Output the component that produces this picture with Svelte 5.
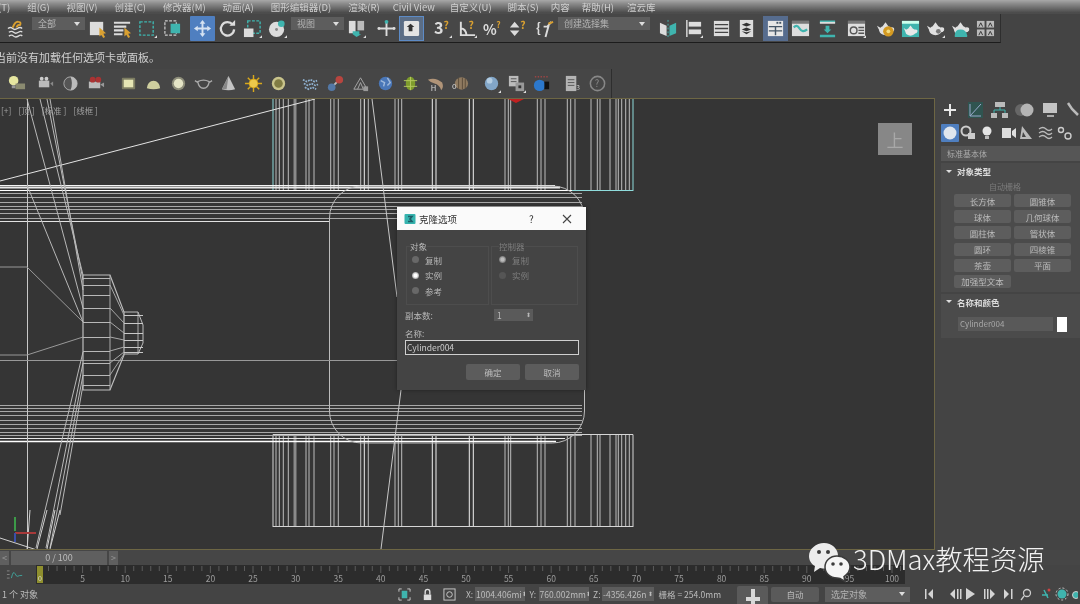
<script>
	const W = '#dcdcdc', T = '#3fb4ae', O = '#d9a031';
	const TEAPOT = `<ellipse cx="10" cy="12" rx="6.500" ry="5"/><path d="M1 7l5 3-1 5zM15 9q5-1 4 3-1 2-4 2zM7 7.500h6l-3-4z"/>`;

	// toolbar glyphs, 20x20 box
	const icons = {
		bind: `<path d="M2 10q3-2 5 0t5 0 5 0M3 14q3-2 5 0t5 0 4 0M3 18q3-2 5 0t5 0 4 0" fill="none" stroke="${W}" stroke-width="1.4"/><path d="M7 9q3-7 6-6 3 0 2 3-3 0-4 3" fill="none" stroke="${O}" stroke-width="2"/>`,
		select: `<rect x="2" y="3" width="14" height="14" fill="${W}"/><path d="M12 9l7 6-3 .5 2 3.500-2 1-2-3.500-2 2z" fill="${O}"/>`,
		byname: `<path d="M1 4h17M1 8h13M1 12h10M1 16h9" stroke="${W}" stroke-width="2.200"/><path d="M12 9l7 6-3 .5 2 3.500-2 1-2-3.500-2 2z" fill="${O}"/>`,
		rect: `<rect x="2" y="3" width="14" height="14" fill="none" stroke="${T}" stroke-width="1.500" stroke-dasharray="3 1.500"/><path d="M20 17v3h-3z" fill="#ddd"/>`,
		win: `<rect x="2" y="2" width="12" height="15" fill="none" stroke="#ccc" stroke-width="1.300" stroke-dasharray="3 1.500"/><rect x="8" y="5" width="10" height="10" fill="${T}"/>`,
		move: `<path d="M10 1l3 4h-2v4h4V7l4 3-4 3v-2h-4v4h2l-3 4-3-4h2v-4H5v2l-4-3 4-3v2h4V5H7z" fill="#d5e2f2"/>`,
		rotate: `<path d="M15.500 6A7 7 0 1 0 17 11" fill="none" stroke="${W}" stroke-width="2.400"/><path d="M12 7h6V1z" fill="${W}"/>`,
		scale: `<rect x="5" y="2" width="13" height="13" fill="none" stroke="${T}" stroke-width="1.500" stroke-dasharray="3 1.500"/><rect x="1" y="10" width="10" height="9" fill="${W}"/><path d="M20 17v3h-3z" fill="#ddd"/>`,
		place: `<circle cx="9" cy="11" r="8" fill="${W}"/><circle cx="9" cy="11" r="1.500" fill="#888"/><circle cx="14" cy="5" r="3.500" fill="${T}"/><path d="M20 17v3h-3z" fill="#ddd"/>`,
		pivot: `<path d="M2 2h7v13H2z" fill="${W}"/><path d="M11 2h7v10h-7z" fill="#bbb"/><path d="M6 13h7v3h2l-5 3-4-3z" fill="${T}"/><path d="M20 17v3h-3z" fill="#ddd"/>`,
		manip: `<path d="M10 3v15M2 10h16" stroke="${W}" stroke-width="2"/><circle cx="10" cy="3" r="2" fill="${T}"/><circle cx="2" cy="10" r="1.500" fill="${W}"/><circle cx="18" cy="10" r="1.500" fill="${W}"/>`,
		kbd: `<rect x="2" y="2" width="16" height="16" rx="1.500" fill="#e4e4e4"/><path d="M9 5l4 3.500h-2V13H7V8.500H5z" fill="#333"/>`,
		snap: `<text x="1" y="16" font-size="17" font-weight="700" fill="${W}">3</text><text x="11" y="10" font-size="11" font-weight="700" fill="${O}">?</text><path d="M20 17v3h-3z" fill="#ddd"/>`,
		angle: `<path d="M3 3v14h15M3 10q5 0 6 7" fill="none" stroke="${W}" stroke-width="2"/><text x="11" y="10" font-size="11" font-weight="700" fill="${O}">?</text><path d="M20 17v3h-3z" fill="#ddd"/>`,
		pct: `<text x="0" y="17" font-size="15" font-weight="700" fill="${W}">%</text><text x="14" y="9" font-size="9" font-weight="700" fill="${O}">?</text>`,
		spin: `<path d="M7 3l5 6H2zM7 18l5-6H2z" fill="${W}"/><text x="13" y="10" font-size="11" font-weight="700" fill="${O}">?</text>`,
		sets: `<text x="0" y="15" font-size="14" font-weight="700" fill="${W}">{</text><path d="M8 8h5l-3 11M16 3l-4 5" fill="none" stroke="${W}" stroke-width="2"/><path d="M13 5l5-2" stroke="${O}" stroke-width="2"/>`,
		mirror: `<path d="M1 4l7 3v11l-7-3z" fill="${W}"/><path d="M18 4l-7 3v11l7-3z" fill="${T}"/><path d="M9.500 1v18" stroke="${T}" stroke-dasharray="2 2"/>`,
		align: `<path d="M3 1v18" stroke="${W}" stroke-width="1.500"/><rect x="5" y="3" width="13" height="5" fill="${W}"/><rect x="5" y="11" width="13" height="5" fill="${W}"/><path d="M20 17v3h-3z" fill="#ddd"/>`,
		list: `<rect x="2" y="2" width="16" height="16" fill="${W}"/><path d="M3 6h14M3 10h14M3 14h14" stroke="#444" stroke-width="1.400"/>`,
		stack: `<rect x="3" y="1" width="14" height="18" fill="${W}"/><path d="M10 4l5 2-5 2-5-2zM10 9l5 2-5 2-5-2zM10 14l5-1-5 3-5-3z" fill="#333"/>`,
		ribbon: `<rect x="2" y="2" width="16" height="16" fill="#e6e6e6"/><path d="M3 8h14M3 12.500h14M10 8v9" stroke="#456" stroke-width="1.500"/><rect x="11" y="3" width="2" height="2" fill="#456"/><rect x="14" y="3" width="2" height="2" fill="#456"/>`,
		curve: `<rect x="1" y="2" width="18" height="16" fill="#ddd"/><rect x="1" y="2" width="18" height="3" fill="#777"/><path d="M3 9q3-4 6 1t8 1" fill="none" stroke="${T}" stroke-width="2.400"/>`,
		dope: `<path d="M2 3h16M2 18h16" stroke="${T}" stroke-width="2.600"/><rect x="2" y="3" width="16" height="2" fill="#ddd"/><path d="M8 7h4v4h2l-4 4-4-4h2z" fill="${T}"/>`,
		schem: `<rect x="1" y="2" width="18" height="16" fill="#ddd"/><rect x="1" y="2" width="18" height="3" fill="#777"/><circle cx="7" cy="12" r="3.500" fill="none" stroke="#555" stroke-width="1.500"/><path d="M12 9h6M12 12h6M12 15h6" stroke="#555" stroke-width="1.500"/><path d="M20 17v3h-3z" fill="#ddd"/>`,
		potgear: `<g fill="#e0e0e0">${TEAPOT}</g><circle cx="13" cy="13" r="5.500" fill="#d49a22"/><circle cx="13" cy="13" r="2" fill="#f2dc80"/>`,
		potrender: `<rect x="1" y="2" width="18" height="17" fill="${T}"/><rect x="1" y="2" width="18" height="3" fill="#cfe"/><g fill="#e8e8e8" transform="translate(2 4) scale(.8)">${TEAPOT}</g>`,
		pot2: `<g fill="#e0e0e0">${TEAPOT}</g><circle cx="13" cy="13" r="2.500" fill="#777"/><path d="M20 17v3h-3z" fill="#ddd"/>`,
		pot3: `<g fill="#e0e0e0">${TEAPOT}</g><path d="M4 17q0-6 6-6t7 6v2H4z" fill="${T}"/>`,
		multi: `<g fill="#bbb"><rect x="1" y="2" width="8" height="7"/><rect x="11" y="2" width="8" height="7"/><rect x="1" y="11" width="8" height="7"/><rect x="11" y="11" width="8" height="7"/></g><path d="M3 8l2-4 2 4M13 8l2-4 2 4M3 17l2-4 2 4M13 17l2-4 2 4" stroke="#333" fill="none"/>`,
		// second bar
		bulb: `<circle cx="7" cy="7" r="5" fill="#e6e6a0"/><rect x="5" y="12" width="4" height="3" fill="#999"/><rect x="9" y="10" width="10" height="6" fill="#8a8a70"/>`,
		cam: `<rect x="3" y="7" width="11" height="7" fill="#bbb"/><circle cx="6" cy="5" r="2" fill="#ccc"/><circle cx="11" cy="5" r="2" fill="#ccc"/><path d="M15 10l3-2v5z" fill="#888"/>`,
		half: `<circle cx="10" cy="10" r="7" fill="#555" stroke="#aaa"/><path d="M10 3a7 7 0 0 1 0 14q3-7 0-14z" fill="#bbb"/>`,
		film: `<rect x="3" y="8" width="12" height="7" fill="#bbb"/><circle cx="7" cy="6" r="3" fill="#a33"/><circle cx="13" cy="6" r="3" fill="#a33"/><path d="M15 11l4-2v5z" fill="#999"/>`,
		lrect: `<rect x="3" y="4" width="14" height="12" rx="1" fill="#7d7d62"/><rect x="5" y="6" width="10" height="8" fill="#e5e5b4"/>`,
		dome: `<path d="M3 15a7 8 0 0 1 14 0q-7 2-14 0z" fill="#cfcf9f"/>`,
		disc: `<circle cx="10" cy="10" r="7" fill="#8d8d7a"/><circle cx="10" cy="10" r="5" fill="#e4e4c6"/>`,
		wpot: `<path d="M4 8q6-3 12 0-1 7-6 7T4 8zM1 7l3 2M19 7l-3 2" fill="none" stroke="#aaa" stroke-width="1.400"/>`,
		spot: `<path d="M10 2l7 14q-7 2-14 0z" fill="#c4c4c4"/><path d="M10 2l-2 14q-3 0-5 0z" fill="#888"/>`,
		sun: `<circle cx="10" cy="10" r="5" fill="#d8a81c"/><path d="M10 1v18M1 10h18M4 4l12 12M16 4L4 16" stroke="#d8a81c" stroke-width="1.500"/><circle cx="10" cy="10" r="4" fill="#ecc94b"/>`,
		olive: `<circle cx="10" cy="10" r="7" fill="#c9c48c"/><circle cx="10" cy="10" r="4.500" fill="#807c44"/>`,
		wave: `<path d="M2 6l4 2 4-2 4 2 3-1M3 10l4 2 4-2 4 2 3-1M4 14l4 2 4-2 4 2" fill="none" stroke="#8fb0cf" stroke-width="1.800" stroke-dasharray="2 1"/>`,
		mol: `<path d="M6 14l8-8" stroke="#bbb" stroke-width="2"/><circle cx="14" cy="6" r="4" fill="#b8453f"/><circle cx="6" cy="14" r="4" fill="#5378a6"/>`,
		wire: `<path d="M3 16l7-12 7 12zM7 16l3-7 3 7" fill="none" stroke="#a8a8a8"/><rect x="13" y="13" width="5" height="5" fill="#999"/>`,
		globe: `<circle cx="10" cy="10" r="7" fill="#4a77b8"/><path d="M5 7l4 2-1 4M12 4l3 5-3 3" stroke="#9fb9db" fill="none" stroke-width="1.500"/>`,
		bug: `<ellipse cx="10" cy="10" rx="5" ry="7" fill="#7e9c2c"/><path d="M3 7h14M3 13h14M10 3v14" stroke="#b5c95f"/>`,
		shrimp: `<path d="M2 6q8-3 15 3 2 5-1 8-2-6-7-7-4-1-7-4z" fill="#b09478"/><text x="5" y="18" font-size="8" fill="#ddd">H</text>`,
		arma: `<ellipse cx="11" cy="10" rx="7" ry="6.500" fill="#8f7a60"/><path d="M8 4v12M12 4v12M15 5v10" stroke="#5c4c3a"/><text x="1" y="16" font-size="8" fill="#ddd">o</text>`,
		sphere: `<circle cx="10" cy="10" r="7" fill="#82a6c8"/><circle cx="8" cy="7" r="3" fill="#b4cde2"/><path d="M20 17v3h-3z" fill="#ddd"/>`,
		copy: `<rect x="2" y="2" width="10" height="11" fill="#bbb"/><path d="M4 5h6M4 8h6" stroke="#555"/><rect x="9" y="9" width="9" height="9" fill="#999"/><rect x="12" y="12" width="3" height="3" fill="#333"/><path d="M20 17v3h-3z" fill="#ddd"/>`,
		mat: `<path d="M3 3h14" stroke="#c44" stroke-dasharray="1.500 1.500"/><circle cx="8" cy="12" r="6" fill="#2c78cc"/><rect x="13" y="8" width="5" height="8" fill="#111"/>`,
		doc: `<rect x="3" y="2" width="11" height="16" fill="#b4b4b4"/><path d="M5 6h7M5 9h7M5 12h7" stroke="#555"/><text x="14" y="17" font-size="7" fill="#ccc">3</text>`,
		help: `<circle cx="10" cy="10" r="7.500" fill="none" stroke="#888" stroke-width="1.600"/><text x="7" y="14" font-size="10" fill="#888">?</text>`
	};

	const mainbar = [
		{ g: 3 }, { i: 'bind' }, { g: 4 }, { s: '全部', w: 53 },
		{ i: 'select' }, { i: 'byname' }, { i: 'rect' }, { i: 'win' }, { g: 5 },
		{ i: 'move', on: 1 }, { i: 'rotate' }, { i: 'scale' }, { i: 'place' }, { g: 1 }, { s: '视图', w: 53 },
		{ i: 'pivot' }, { g: 5 }, { i: 'manip' }, { i: 'kbd', on: 2 }, { g: 6 },
		{ i: 'snap' }, { i: 'angle' }, { i: 'pct' }, { i: 'spin' }, { g: 3 }, { i: 'sets' },
		{ s: '创建选择集', w: 92 }, { g: 6 }, { i: 'mirror' }, { i: 'align' }, { g: 3 },
		{ i: 'list' }, { i: 'stack' }, { g: 4 }, { i: 'ribbon', on: 3 }, { i: 'curve' }, { g: 2 }, { i: 'dope' }, { g: 4 },
		{ i: 'schem' }, { g: 4 }, { i: 'potgear' }, { i: 'potrender' }, { i: 'pot2' }, { i: 'pot3' }, { i: 'multi' }
	];

	const lightbar = [
		{ g: 4 }, { i: 'bulb' }, { g: 4 },
		{ i: 'cam' }, { i: 'half' }, { i: 'film' }, { g: 8 },
		{ i: 'lrect' }, { i: 'dome' }, { i: 'disc' }, { i: 'wpot' }, { i: 'spot' }, { i: 'sun' }, { i: 'olive' }, { g: 7 },
		{ i: 'wave' }, { i: 'mol' }, { i: 'wire' }, { i: 'globe' }, { i: 'bug' }, { i: 'shrimp' }, { i: 'arma' }, { g: 6 },
		{ i: 'sphere' }, { i: 'copy' }, { i: 'mat' }, { g: 6 }, { i: 'doc' }, { i: 'help' }
	];

	const menus = ['(T)', '组(G)', '视图(V)', '创建(C)', '修改器(M)', '动画(A)', '图形编辑器(D)', '渲染(R)', 'Civil View', '自定义(U)', '脚本(S)', '内容', '帮助(H)', '渲云库'];

	// wireframe, in page coordinates
	const comb = [48, 58, 70, 85, 138, 147, 162, 212, 222, 235, 302, 313, 325, 405, 415, 425, 517, 528, 628, 640, 735, 745, 752, 832, 843, 855, 922, 932, 945, 993, 1012, 1020, 1050, 1068, 1075, 1085, 1097, 1108].map(z => +(260 + z / 3).toFixed(1));
	const bright = [313, 517, 528, 628, 640].map(z => +(260 + z / 3).toFixed(1));
	const bandTop = [193, 197, 202, 206, 209, 213, 218];
	const bandBottom = [405, 408, 411, 415, 420, 424, 428, 432, 435];
	const barrelYs = [278, 285, 295, 308, 322, 337, 351, 363, 375, 385];
	const noseYs = [315, 323, 333, 340, 347, 352];
	const fan = [[27, 99, 83, 308], [40, 99, 83, 275], [47, 99, 83, 280], [50, 99, 83, 290], [27, 185, 83, 322], [83, 352, 36, 548], [83, 363, 46, 548], [83, 375, 50, 548], [83, 385, 60, 515]];
	const spokes = [[110, 285, 124, 315], [110, 308, 124, 323], [110, 322, 124, 333], [110, 337, 124, 340], [110, 351, 124, 347], [110, 363, 124, 352], [110, 375, 124, 354]];

	const ticks = Array.from({ length: 102 }, (_, n) => n);
	const frames = Array.from({ length: 20 }, (_, n) => (n + 1) * 5);

	const shapes = ['长方体', '圆锥体', '球体', '几何球体', '圆柱体', '管状体', '圆环', '四棱锥', '茶壶', '平面', '加强型文本'];
</script>

{#snippet glyph(name)}
	<svg class="glyph" viewBox="0 0 20 20" width="19" height="19">{@html icons[name]}</svg>
{/snippet}

{#snippet bar(items)}
	{#each items as it}
		{#if it.g}
			<span class="gap" style="width:{it.g}px"></span>
		{:else if it.s}
			<div class="combo" style="width:{it.w}px"><span>{it.s}</span><i></i></div>
		{:else}
			<div class="tb" class:blue={it.on === 1} class:ring={it.on === 2} class:slate={it.on === 3}>{@render glyph(it.i)}</div>
		{/if}
	{/each}
{/snippet}

<div class="app">
	<nav class="menu">
		{#each menus as m}<span>{m}</span>{/each}
	</nav>

	<div class="main-row"><div class="toolbar">{@render bar(mainbar)}</div></div>

	<div class="ribbon">当前没有加载任何选项卡或面板。</div>

	<div class="main-row second"><div class="toolbar light">{@render bar(lightbar)}</div></div>

	<div class="work">
		<div class="viewport">
			<svg class="wire" viewBox="0 98 935 452" width="935" height="452">
				<g stroke="#d6d6d6" stroke-width="1" fill="none">
					<!-- tyre combs -->
					{#each comb as x}
						<path d="M{x} 99V190M{x} 434.500V527" stroke={bright.includes(x) ? '#f0f0f0' : '#bdbdbd'}/>
					{/each}
					<path d="M295 99V190M295 434.500V527" stroke="#8a8a8a" stroke-width="3"/>
					<path d="M273 434.500V527M633 434.500V527"/>
					<path d="M273 99v92M633 99v92" stroke="#8fdcdc"/>
					<path d="M273 190.500H633" stroke="#8fdcdc"/>
					<path d="M273 434.500H633M273 526.500H633"/>

					<!-- body bands -->
					<path d="M0 185.500H555" stroke="#f4f4f4"/>
					<path d="M0 187.500H560" stroke="#e8e8e8" stroke-width="2"/>
					<path d="M0 190.500H572" stroke="#fff"/>
					{#each bandTop as y}<path d="M0 {y}.5H582" stroke="#a8a8a8"/>{/each}
					<path d="M0 221.500H330" stroke="#e2e2e2"/>
					{#each bandBottom as y}<path d="M0 {y}.5H582" stroke="#a8a8a8"/>{/each}
					<path d="M0 438.500H565" stroke="#e8e8e8"/>
					<path d="M0 441.500H556" stroke="#fff" stroke-width="1.500"/>
					<rect x="329.500" y="186" width="255" height="257" rx="32" stroke="#bcbcbc"/>

					<!-- axle and hub -->
					<path d="M27.500 99V550" stroke="#c8c8c8"/>
					<path d="M0 360.500H400" stroke="#999"/>
					<path d="M0 181L315 99" stroke="#e4e4e4"/>
					<path d="M372 99L397 297M401 390L381 549" stroke="#c8c8c8"/>
					<path d="M0 267H27L83 322M0 355H27L83 337" stroke="#999"/>
					{#each fan as f}<path d="M{f[0]} {f[1]}L{f[2]} {f[3]}" stroke="#b8b8b8"/>{/each}
					<path d="M0 538L37 550M30 510L27 550M47 510L37 549M55 510L47 549M60 510L50 549" stroke="#d0d0d0"/>

					<path d="M83 275H110L124 312V355L110 390H83Z" stroke="#bdbdbd" stroke-width="1.200"/>
					<path d="M110 275V390" stroke="#aaa"/>
					{#each barrelYs as y}<path d="M83 {y}.5H110" stroke="#b8b8b8"/>{/each}
					{#each spokes as s}<path d="M{s[0]} {s[1]}L{s[2]} {s[3]}" stroke="#a8a8a8"/>{/each}
					<path d="M124 312H138L143 325V343L138 354H124" stroke="#bdbdbd"/>
					<path d="M138 312V354" stroke="#aaa"/>
					{#each noseYs as y}<path d="M124 {y}.5H143" stroke="#c8c8c8"/>{/each}
				</g>
				<!-- axis tripod -->
				<path d="M15 531V517" stroke="#3c9a48" stroke-width="2"/>
				<path d="M15 533H36" stroke="#a83a3a" stroke-width="2"/>
				<path d="M15 533V542" stroke="#3a4fa8" stroke-width="2"/>
				<path d="M506 98H526L516 103Z" fill="#c02020"/>
			</svg>
			<div class="vp-label"><span>[+]</span><span>[顶 ]</span><span>[标准 ]</span><span>[线框 ]</span></div>
			<div class="cube">上</div>
		</div>

		<aside class="panel">
			<div class="tabs">
				<svg viewBox="0 0 144 24" width="144" height="24">
					<path d="M9 12h12M15 6v12" stroke="#e8e8e8" stroke-width="2"/>
					<rect x="33" y="4" width="15" height="16" fill="#2f5450"/>
					<path d="M35 18L46 6M35 6v12h11" stroke="#9ac" fill="none"/>
					<path d="M60 4h10v5H60zM56 15h6v5h-6zM67 15h6v5h-6z" fill="#bbb"/>
					<path d="M65 9v3M59 15v-3h11v3" stroke="#3fb4ae" fill="none"/>
					<circle cx="86" cy="12" r="6" fill="#666"/>
					<circle cx="92" cy="12" r="6.500" fill="#b4b4b4"/>
					<rect x="108" y="5" width="14" height="10" fill="#c4c4c4"/>
					<path d="M112 18h7" stroke="#aaa" stroke-width="2"/>
					<path d="M133 5l4 6 6 6" stroke="#bbb" stroke-width="2.500" fill="none"/>
				</svg>
			</div>
			<div class="subtabs">
				<svg viewBox="0 0 144 20" width="144" height="20">
					<rect x="6" y="1" width="18" height="18" rx="1" fill="#4f7fc0"/>
					<circle cx="15" cy="10" r="6.500" fill="#dfe6ee"/>
					<circle cx="31" cy="8" r="4.500" fill="none" stroke="#ccc" stroke-width="2"/>
					<rect x="33" y="10" width="7" height="6" fill="#ccc"/>
					<circle cx="52" cy="8" r="4.500" fill="#e4e4e4"/>
					<path d="M50 13h4v3h-4z" fill="#bbb"/>
					<path d="M67 5h9v10h-9zM77 8l4-3v10l-4-3z" fill="#ddd"/>
					<path d="M87 3l10 13H85z M88 9l-1 5h4z" fill="#bbb" fill-rule="evenodd"/>
					<path d="M104 6q4-3 7 0t6 0M104 10q4-3 7 0t6 0M104 14q4-3 7 0t6 0" stroke="#bbb" stroke-width="1.300" fill="none"/>
					<circle cx="126" cy="7" r="2.500" fill="none" stroke="#ccc" stroke-width="1.400"/>
					<circle cx="133" cy="13" r="3" fill="none" stroke="#ccc" stroke-width="1.400"/>
				</svg>
			</div>
			<div class="kind">标准基本体</div>

			<section class="roll">
				<h3><i></i>对象类型</h3>
				<div class="grid-check">自动栅格</div>
				<div class="shapes">
					{#each shapes as s}<button>{s}</button>{/each}
				</div>
			</section>

			<section class="roll name-roll">
				<h3><i></i>名称和颜色</h3>
				<div class="name-line"><span class="name-field">Cylinder004</span><span class="swatch"></span></div>
			</section>
		</aside>
	</div>

	<div class="slider-row">
		<div class="arrow">&lt;</div>
		<div class="thumb">0 / 100</div>
		<div class="arrow">&gt;</div>
	</div>

	<div class="track-row">
		<div class="curve-btn">
			<svg viewBox="0 0 20 12" width="18" height="11"><path d="M1 2h3M1 6h3M1 10h3" stroke="#888"/><path d="M6 10q2-9 4-5t3 3 5-1" fill="none" stroke="#3fa89f"/></svg>
		</div>
		<div class="track">
			<svg viewBox="36 565 869 19" width="869" height="19">
				{#each ticks as n}
					<path d="M{40 + n * 8.52} 566v{n % 5 ? 5 : 7}" stroke="#5c5c5c"/>
				{/each}
				{#each frames as f}
					<text x={40 + f * 8.52} y="582" text-anchor="middle" class="frame">{f}</text>
				{/each}
			</svg>
			<div class="key">0</div>
		</div>
	</div>

	<footer class="status">
		<span class="count">1 个 对象</span>
		<svg class="si" viewBox="0 0 14 14" width="13" height="13"><path d="M1 4V1h3M10 1h3v3M13 10v3h-3M4 13H1v-3" stroke="#ccc" fill="none"/><rect x="4" y="3" width="6" height="8" fill="#3fb4ae"/></svg>
		<svg class="si lock" viewBox="0 0 14 14" width="13" height="13"><path d="M4.500 7V4a2.500 2.500 0 0 1 5 0v3" fill="none" stroke="#ddd" stroke-width="1.500"/><rect x="3" y="7" width="8" height="6" fill="#ddd"/></svg>
		<svg class="si abs" viewBox="0 0 14 14" width="13" height="13"><rect x="1" y="1" width="12" height="12" fill="none" stroke="#ccc"/><circle cx="7" cy="7" r="3" fill="none" stroke="#ccc"/></svg>
		<span class="axis x">X:</span><span class="coord c1">1004.406mi<b>⬍</b></span>
		<span class="axis">Y:</span><span class="coord c2">760.002mm<b>⬍</b></span>
		<span class="axis">Z:</span><span class="coord c3">-4356.426n<b>⬍</b></span>
		<span class="grid-size">栅格 = 254.0mm</span>
		<div class="keybtn"><svg viewBox="0 0 20 18" width="20" height="18"><path d="M10 3v15M3 13h14" stroke="#d8d8d8" stroke-width="4"/></svg></div>
		<div class="auto">自动</div>
		<div class="combo sel"><span>选定对象</span><i></i></div>
		<svg class="play" viewBox="0 0 154 14" width="154" height="14">
			<g fill="#d4d4d4">
				<path d="M1 2h1.500v10H1zM9 2v10L4 7z"/>
				<path d="M31 2v10l-5-5zM33 2h1.500v10H33zM36 2h1.500v10H36z"/>
				<path d="M42 1v12l9-6z"/>
				<path d="M60 2h1.500v10H60zM63 2h1.500v10H63zM66 2v10l5-5z"/>
				<path d="M80 2v10l5-5zM87 2h1.500v10H87z"/>
			</g>
			<circle cx="103" cy="6" r="3.500" fill="none" stroke="#ccc" stroke-width="1.300"/>
			<path d="M100 9l-3 4" stroke="#ccc" stroke-width="1.300"/>
			<path d="M120 3l4 8M118 8h6" stroke="#3fb4ae" stroke-width="1.500"/>
			<circle cx="125" cy="3" r="1.500" fill="#c44"/>
			<circle cx="138" cy="7" r="4.500" fill="#3fb4ae"/>
			<circle cx="138" cy="7" r="6" fill="none" stroke="#ccc" stroke-dasharray="2 2"/>
			<circle cx="152" cy="8" r="3.500" fill="#3fb4ae" stroke="#ccc"/>
		</svg>
	</footer>

	<!-- clone dialog -->
	<div class="dialog">
		<header>
			<svg viewBox="0 0 12 12" width="12" height="12"><rect x="0.500" y="1" width="11" height="10" rx="1" fill="#35b3ae"/><path d="M4 3.500h4L6 6l2 2.500H4" fill="none" stroke="#1d5d66" stroke-width="1.600"/></svg>
			<span class="title">克隆选项</span>
			<span class="q">?</span>
			<svg class="x" viewBox="0 0 10 10" width="10" height="10"><path d="M1 1l8 8M9 1l-8 8" stroke="#444" stroke-width="1.100"/></svg>
		</header>
		<div class="groups">
			<fieldset>
				<legend>对象</legend>
				<label><i></i>复制</label>
				<label><i class="dot"></i>实例</label>
				<label><i></i>参考</label>
			</fieldset>
			<fieldset class="off">
				<legend>控制器</legend>
				<label><i class="dot"></i>复制</label>
				<label><i></i>实例</label>
			</fieldset>
		</div>
		<div class="copies">
			<span>副本数:</span>
			<div class="spin"><span>1</span><b>⬍</b></div>
		</div>
		<div class="name-label">名称:</div>
		<div class="name-input">Cylinder004</div>
		<div class="actions">
			<button>确定</button>
			<button>取消</button>
		</div>
	</div>

	<div class="mark">
		<svg viewBox="0 0 44 44" width="44" height="44">
			<path d="M16 3C8 3 1 9 1 16c0 4 2 8 6 10l-1 6 6-4c2 .5 3 .5 5 .5 6 0 13-5 13-13C30 9 24 3 16 3z" fill="#ececec"/>
			<path d="M29 16c-7 0-12 5-12 11s5 11 12 11l3 .5 5 3-1-5c3-2 6-5 6-9.500 0-6-6-11-13-11z" fill="#f5f5f5" stroke="#3b3b3b" stroke-width="1.500"/>
			<circle cx="11" cy="12" r="2" fill="#3b3b3b"/><circle cx="20" cy="12" r="2" fill="#3b3b3b"/>
			<circle cx="25" cy="24" r="1.800" fill="#3b3b3b"/><circle cx="33" cy="24" r="1.800" fill="#3b3b3b"/>
		</svg>
		<span>3DMax教程资源</span>
	</div>
</div>

<style>
	:global(body) {
		margin: 0;
		background: #444;
	}

	.app {
		position: relative;
		display: flex;
		flex-direction: column;
		width: 1080px;
		height: 604px;
		overflow: hidden;
		background: #444;
		color: #c4c4c4;
		font: 10px "Noto Sans CJK SC", "Noto Sans", sans-serif;
		filter: blur(0.45px);
	}

	.menu {
		display: flex;
		gap: 17px;
		height: 14px;
		padding-left: 0;
		margin-left: -2px;
		align-items: center;
		background: linear-gradient(#a8a8a8, #8c8c8c 25%, #4c4c4c 90%);
		color: #cfcfcf;
		font-size: 9.500px;
		white-space: nowrap;
	}
	/* the tail of the menu sits tighter */
	.menu span:nth-child(9) { margin-left: -4px; }
	.menu span:nth-child(10) { margin-left: -2px; }
	.menu span:nth-child(11) { margin-left: -1px; }
	.menu span:nth-child(12) { margin-left: -5px; }
	.menu span:nth-child(13) { margin-left: -5px; }
	.menu span:nth-child(14) { margin-left: -4px; }

	.main-row {
		height: 29px;
		display: flex;
		background: #444;
		border-bottom: 1px solid #444;
		box-sizing: content-box;
	}
	.main-row.second {
		height: 29px;
		border-bottom: 0;
	}

	.toolbar {
		display: flex;
		align-items: center;
		width: 1001px;
		height: 29px;
		flex: none;
		border-bottom: 1px solid #1c1c1c;
		border-right: 1px solid #2e2e2e;
		box-sizing: border-box;
		background: #474747;
	}
	.toolbar.light {
		width: 612px;
		border-bottom: 0;
		background: #464646;
	}

	.gap { flex: none; }

	.tb {
		flex: none;
		width: 25px;
		height: 25px;
		display: flex;
		align-items: center;
		justify-content: center;
		box-sizing: border-box;
	}
	.tb.blue { background: #4f7fc0; border-radius: 1px; }
	.tb.ring { background: #5b6d85; border: 1px solid #5d8bc6; }
	.tb.slate { background: #566c8e; }
	.glyph { display: block; overflow: visible; }

	.combo {
		flex: none;
		display: flex;
		align-items: center;
		justify-content: space-between;
		height: 13px;
		padding: 0 5px 0 6px;
		box-sizing: border-box;
		background: #5d5d5d;
		color: #b4b4b4;
		font-size: 9px;
	}
	.toolbar .combo { margin-top: -9px; }
	.combo i {
		border: 3px solid transparent;
		border-top: 4px solid #ddd;
		border-bottom: 0;
	}

	.ribbon {
		height: 25px;
		display: flex;
		align-items: center;
		margin-left: -5px;
		font-size: 11px;
		color: #d0d0d0;
	}

	.work {
		flex: none;
		display: flex;
		height: 452px;
	}

	.viewport {
		position: relative;
		flex: none;
		width: 935px;
		height: 452px;
		box-sizing: border-box;
		background: #353535;
	}
	.viewport::after {
		content: "";
		position: absolute;
		inset: 0;
		border: 1px solid #6d6644;
		border-left: 0;
		pointer-events: none;
	}
	.wire { display: block; }

	.vp-label {
		position: absolute;
		left: 1px;
		top: 6px;
		display: flex;
		gap: 7px;
		font-size: 8.500px;
		color: #a0a0a0;
	}

	.cube {
		position: absolute;
		left: 878px;
		top: 25px;
		width: 34px;
		height: 32px;
		display: flex;
		align-items: center;
		justify-content: center;
		background: #878787;
		color: #a8a8a8;
		font-size: 17px;
	}

	.panel {
		flex: 1;
		min-width: 0;
		display: flex;
		flex-direction: column;
		padding-left: 1px;
		background: #444;
	}
	.tabs { height: 24px; }
	.subtabs { height: 20px; margin: 1px 0 3px; }
	.tabs svg, .subtabs svg { display: block; margin-left: -1px; }

	.kind {
		height: 15px;
		margin-left: 5px;
		padding-left: 6px;
		background: #565656;
		font-size: 8px;
		line-height: 15px;
		color: #aaa;
		flex: none;
	}

	.roll {
		margin: 2px 0 0 5px;
		background: #4b4b4b;
		flex: none;
	}
	.roll h3 {
		display: flex;
		align-items: center;
		gap: 5px;
		height: 16px;
		margin: 0;
		padding-left: 5px;
		font-size: 8.500px;
		color: #dcdcdc;
	}
	.roll h3 i {
		border: 3px solid transparent;
		border-top: 3px solid #ddd;
		border-bottom: 0;
	}
	.grid-check {
		height: 15px;
		padding-left: 48px;
		font-size: 8px;
		line-height: 15px;
		color: #7c7c7c;
	}
	.shapes {
		display: grid;
		grid-template-columns: 57px 57px;
		gap: 3.200px 3px;
		padding: 0 0 4px 13px;
	}
	.shapes button {
		height: 13px;
		padding: 0;
		border: 0;
		border-radius: 2px;
		background: #5d5d5d;
		color: #bbb;
		font: 8.500px "Noto Sans CJK SC", sans-serif;
	}

	.name-roll { padding-bottom: 6px; }
	.name-line {
		display: flex;
		align-items: center;
		gap: 4px;
		margin-top: 7px;
		padding-left: 17px;
	}
	.name-field {
		width: 95px;
		height: 14px;
		padding-left: 2px;
		box-sizing: border-box;
		background: #595959;
		font-size: 8px;
		line-height: 14px;
		color: #a8a8a8;
	}
	.swatch {
		width: 10px;
		height: 15px;
		background: #fff;
	}

	.slider-row {
		flex: none;
		display: flex;
		gap: 2px;
		height: 14px;
		padding-top: 1px;
		box-sizing: content-box;
		background: #464646;
	}
	.arrow {
		width: 9px;
		background: #5f5f5f;
		color: #999;
		line-height: 13px;
		text-align: center;
		font-size: 9px;
	}
	.thumb {
		width: 96px;
		background: #5f5f5f;
		color: #bbb;
		text-align: center;
		font-size: 9px;
		line-height: 14px;
	}

	.track-row {
		flex: none;
		display: flex;
		height: 19px;
	}
	.curve-btn {
		width: 36px;
		display: flex;
		align-items: center;
		padding-left: 6px;
		box-sizing: border-box;
	}
	.track {
		position: relative;
		width: 869px;
		background: #2c2c2c;
	}
	.track svg { display: block; }
	.frame {
		fill: #9c9c9c;
		font-size: 8.500px;
	}
	.key {
		position: absolute;
		left: 1px;
		top: 1px;
		width: 6px;
		height: 17px;
		background: #8f8f2e;
		color: #ddd;
		font-size: 7px;
		line-height: 24px;
		text-align: center;
	}

	.status {
		flex: none;
		display: flex;
		align-items: center;
		height: 20px;
		font-size: 8.500px;
		color: #bcbcbc;
		white-space: nowrap;
	}
	.count { flex: none; width: 398px; padding-left: 2px; box-sizing: border-box; font-size: 9px; }
	.si { flex: none; }
	.lock { margin-left: 10px; }
	.abs { margin-left: 9px; }
	.axis { width: 8px; margin-left: 0; flex: none; }
	.axis.x { margin-left: 10px; }
	.coord {
		display: flex;
		justify-content: space-between;
		height: 14px;
		margin: 0 4.500px 0 1px;
		padding: 0 1px;
		box-sizing: border-box;
		background: #5c5c5c;
		line-height: 14px;
		overflow: hidden;
		flex: none;
	}
	.coord b { font-size: 6px; font-weight: 400; }
	.c1 { width: 50px; }
	.c2 { width: 50px; }
	.c3 { width: 52px; }
	.grid-size { width: 78.500px; flex: none; }
	.keybtn {
		flex: none;
		width: 31px;
		height: 18px;
		margin-top: 2px;
		background: #5a5a5a;
		border-radius: 2px 2px 0 0;
		display: flex;
		justify-content: center;
		align-self: flex-end;
	}
	.auto {
		flex: none;
		width: 48px;
		height: 15px;
		margin-left: 3px;
		background: #5a5a5a;
		border-radius: 2px;
		line-height: 15px;
		text-align: center;
	}
	.sel {
		width: 85px;
		margin-left: 6px;
		height: 15px;
	}
	.play { margin-left: 14px; flex: none; }

	.dialog {
		position: absolute;
		left: 397px;
		top: 207px;
		width: 189px;
		height: 183px;
		background: #444;
		box-shadow: 0 0 4px rgba(0, 0, 0, 0.4);
		color: #b8b8b8;
		font-size: 8.500px;
	}
	.dialog header {
		display: flex;
		align-items: center;
		height: 23px;
		padding-left: 7px;
		background: #fafafa;
		color: #333;
		font-size: 9.500px;
	}
	.title { margin-left: 3px; }
	.q { margin-left: 72px; font-size: 10px; }
	.x { margin-left: 28px; }

	.groups {
		display: flex;
		gap: 2px;
		padding: 10px 8px 0 9px;
	}
	fieldset {
		width: 83px;
		height: 65px;
		margin: 0;
		padding: 0 0 0 5px;
		box-sizing: border-box;
		border: 1px solid #4d4d4d;
		display: flex;
		flex-direction: column;
		min-width: 0;
	}
	fieldset.off { width: 87px; color: #7e7e7e; padding-left: 7px; }
	legend { padding: 0; margin-left: -2px; font-size: 8.500px; }
	fieldset.off legend { margin-left: 0; }
	label {
		display: flex;
		align-items: center;
		gap: 6px;
		height: 15.500px;
	}
	label i {
		width: 7px;
		height: 7px;
		border-radius: 50%;
		background: #686868;
	}
	label i.dot { background: radial-gradient(#fff 30%, #8a8a8a 80%); }
	fieldset.off label i.dot { background: radial-gradient(#bbb 30%, #666 80%); }
	fieldset.off label i { background: #555; }

	.copies {
		display: flex;
		align-items: center;
		margin-top: 4px;
		padding-left: 8px;
	}
	.copies > span { width: 89px; }
	.spin {
		display: flex;
		justify-content: space-between;
		width: 39px;
		height: 12px;
		padding: 0 2px 0 3px;
		box-sizing: border-box;
		background: #5a5a5a;
		line-height: 12px;
	}
	.spin b { font-size: 6px; font-weight: 400; }

	.name-label {
		margin-top: 6px;
		padding-left: 8px;
		height: 13px;
	}
	.name-input {
		height: 15px;
		margin-left: 8px;
		width: 174px;
		padding-left: 1px;
		box-sizing: border-box;
		border: 1px solid #cfcfcf;
		background: #3a3a3a;
		color: #ccc;
		line-height: 13px;
		font-size: 8.500px;
	}
	.actions {
		display: flex;
		justify-content: flex-end;
		gap: 5px;
		padding: 9px 7px 0 0;
	}
	.actions button {
		width: 54px;
		height: 16px;
		padding: 0;
		border: 0;
		border-radius: 2px;
		background: #5c5c5c;
		color: #bdbdbd;
		font: 8.500px "Noto Sans CJK SC", sans-serif;
	}

	.mark {
		position: absolute;
		left: 808px;
		top: 532px;
		display: flex;
		align-items: center;
		gap: 1px;
		color: #f2f2f2;
		font-size: 27.400px;
		font-weight: 300;
		line-height: 34px;
		white-space: nowrap;
	}
	.mark svg { flex: none; margin-top: 8px; }
	.mark span { margin-top: -1px; }
</style>
